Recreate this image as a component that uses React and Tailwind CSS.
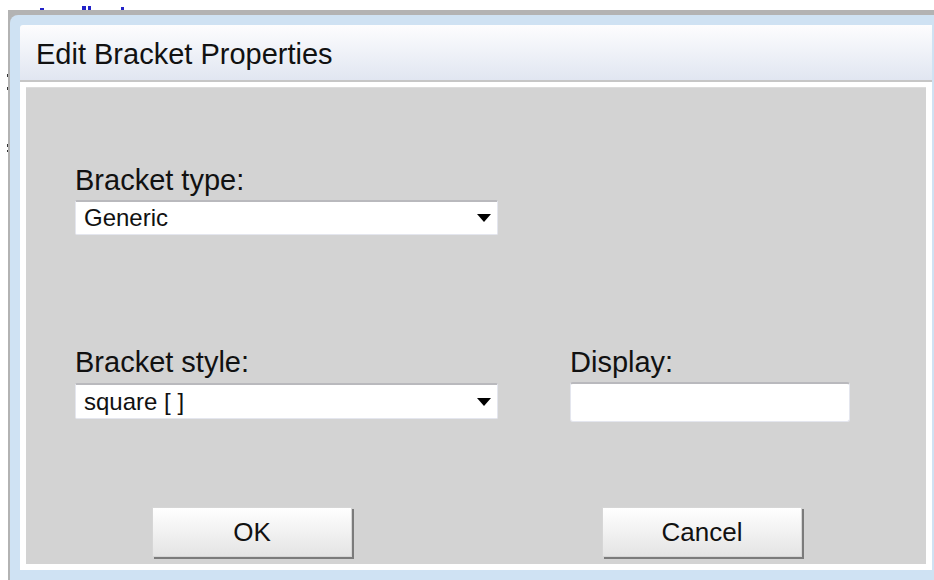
import React from 'react';

// Small dropdown caret used in the select boxes
const Caret = () => (
  <svg width="14" height="8" viewBox="0 0 14 8" className="shrink-0">
    <path d="M0 0 H14 L7 8 Z" fill="#000" />
  </svg>
);

const Select = ({ value, height }) => (
  <div
    className={`w-[423px] ${height} bg-white rounded-[2px] border-t-2 border-t-[#b9b9bd] border-x border-b border-x-[#e4e6ee] border-b-[#e4e6ee] flex items-center justify-between pl-[8px] pr-[6px]`}
  >
    <span className="text-[24px] leading-none text-[#111]">{value}</span>
    <Caret />
  </div>
);

const Button = ({ children }) => (
  <button className="w-[200px] h-[50px] bg-gradient-to-b from-white to-[#e4e4e4] border border-[#d6d6d6] shadow-[2px_2px_0_#7b7b7b] text-[26px] text-[#111] leading-none">
    {children}
  </button>
);

const App = () => {
  return (
    <div className="w-[934px] h-[580px] bg-white flex flex-col overflow-hidden font-['Liberation_Sans',Arial,sans-serif]">
      {/* clipped bits of the page behind the dialog */}
      <div className="h-[10px] flex items-end">
        <div className="ml-[40px] w-[4px] h-[2px] bg-[#2222c8]" />
        <div className="ml-[38px] w-[4px] h-[4px] bg-[#2222c8]" />
        <div className="ml-[2px] w-[3px] h-[4px] bg-[#2222c8]" />
        <div className="ml-[30px] w-[3px] h-[3px] bg-[#2222c8]" />
      </div>

      <div className="flex flex-1">
        <div className="w-[8px] flex flex-col items-end">
          <div className="mt-[64px] w-[1px] h-[3px] bg-[#333]" />
          <div className="mt-[10px] w-[1px] h-[3px] bg-[#333]" />
          <div className="mt-[54px] w-[1px] h-[3px] bg-[#333]" />
          <div className="mt-[3px] w-[1px] h-[2px] bg-[#333]" />
        </div>

        {/* window drop shadow */}
        <div className="flex-1 flex flex-col bg-[#b3b3b3] pt-[5px] pl-[2px]">
          <div className="flex-1 flex flex-col bg-[#cfe2f3] rounded-tl-[8px] pt-[10px] pl-[10px] pr-[2px] pb-[10px]">
            <div className="h-[55px] bg-gradient-to-b from-[#fdfdfe] to-[#e1e6f1] rounded-tl-[3px] flex items-center pl-[16px] pt-[4px] text-[29px] text-[#111]">
              Edit Bracket Properties
            </div>
            <div className="h-[2px] bg-[#c6c6c6]" />

            <div className="flex-1 flex flex-col bg-white pt-[5px] px-[6px] pb-[6px]">
              <div className="flex-1 bg-[#d3d3d3] border-t border-t-[#dcdcdc] flex flex-col pt-[76px] pl-[49px]">
                <div className="text-[29px] leading-[32px] text-[#111]">Bracket type:</div>
                <div className="mt-[4px]">
                  <Select value="Generic" height="h-[35px]" />
                </div>

                <div className="mt-[111px] flex gap-[72px]">
                  <div className="flex flex-col">
                    <div className="text-[29px] leading-[32px] text-[#111]">Bracket style:</div>
                    <div className="mt-[5px]">
                      <Select value="square [ ]" height="h-[36px]" />
                    </div>
                  </div>
                  <div className="flex flex-col">
                    <div className="text-[29px] leading-[32px] text-[#111]">Display:</div>
                    <input
                      type="text"
                      className="mt-[4px] w-[280px] h-[40px] bg-white rounded-[3px] border-t-2 border-t-[#b9b9bd] border-x border-b border-x-[#e4e6ee] border-b-[#e4e6ee] outline-none px-[6px] text-[24px]"
                    />
                  </div>
                </div>

                <div className="mt-[85px] ml-[77px] flex gap-[250px]">
                  <Button>OK</Button>
                  <Button>Cancel</Button>
                </div>
              </div>
            </div>
          </div>
        </div>
      </div>
    </div>
  );
};

export default App;
